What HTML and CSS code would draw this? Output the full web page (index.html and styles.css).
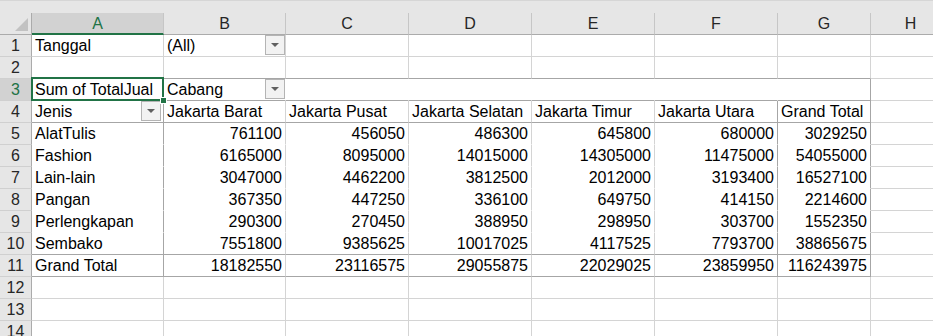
FILE: index.html
```html
<!DOCTYPE html>
<html lang="id">
<head>
    <meta charset="UTF-8">
    <title>Pivot - Penjualan</title>
    <link rel="stylesheet" href="styles.css">
</head>
<body>

<div class="sheet">
    <!-- area kosong di atas header kolom -->
    <div class="top-strip"></div>

    <!-- header kolom -->
    <div class="corner"></div>
    <div class="ch sel">A</div>
    <div class="ch">B</div>
    <div class="ch">C</div>
    <div class="ch">D</div>
    <div class="ch">E</div>
    <div class="ch">F</div>
    <div class="ch">G</div>
    <div class="ch">H</div>

    <!-- baris 1 : filter -->
    <div class="rh">1</div>
    <div class="c">Tanggal</div>
    <div class="c drop">(All)<span class="dd"></span></div>
    <div class="c"></div><div class="c"></div><div class="c"></div><div class="c"></div><div class="c"></div><div class="c"></div>

    <!-- baris 2 -->
    <div class="rh">2</div>
    <div class="c db"></div><div class="c db"></div><div class="c db"></div><div class="c db"></div><div class="c db"></div><div class="c db"></div><div class="c db"></div>
    <div class="c"></div>

    <!-- baris 3 : judul pivot -->
    <div class="rh sel">3</div>
    <div class="c dr db active">Sum of TotalJual<span class="cursor"><span class="handle"></span></span></div>
    <div class="c nr db drop">Cabang<span class="dd"></span></div>
    <div class="c nr db"></div>
    <div class="c nr db"></div>
    <div class="c nr db"></div>
    <div class="c nr db"></div>
    <div class="c dr db"></div>
    <div class="c"></div>

    <!-- baris 4 : header cabang -->
    <div class="rh">4</div>
    <div class="c dr db drop">Jenis<span class="dd dd-a"></span></div>
    <div class="c db">Jakarta Barat</div>
    <div class="c db">Jakarta Pusat</div>
    <div class="c db">Jakarta Selatan</div>
    <div class="c db">Jakarta Timur</div>
    <div class="c dr db">Jakarta Utara</div>
    <div class="c dr db">Grand Total</div>
    <div class="c"></div>

    <div class="rh">5</div>
    <div class="c dr nb">AlatTulis</div>
    <div class="c nb n">761100</div>
    <div class="c nb n">456050</div>
    <div class="c nb n">486300</div>
    <div class="c nb n">645800</div>
    <div class="c dr nb n">680000</div>
    <div class="c dr nb n">3029250</div>
    <div class="c"></div>

    <div class="rh">6</div>
    <div class="c dr nb">Fashion</div>
    <div class="c nb n">6165000</div>
    <div class="c nb n">8095000</div>
    <div class="c nb n">14015000</div>
    <div class="c nb n">14305000</div>
    <div class="c dr nb n">11475000</div>
    <div class="c dr nb n">54055000</div>
    <div class="c"></div>

    <div class="rh">7</div>
    <div class="c dr nb">Lain-lain</div>
    <div class="c nb n">3047000</div>
    <div class="c nb n">4462200</div>
    <div class="c nb n">3812500</div>
    <div class="c nb n">2012000</div>
    <div class="c dr nb n">3193400</div>
    <div class="c dr nb n">16527100</div>
    <div class="c"></div>

    <div class="rh">8</div>
    <div class="c dr nb">Pangan</div>
    <div class="c nb n">367350</div>
    <div class="c nb n">447250</div>
    <div class="c nb n">336100</div>
    <div class="c nb n">649750</div>
    <div class="c dr nb n">414150</div>
    <div class="c dr nb n">2214600</div>
    <div class="c"></div>

    <div class="rh">9</div>
    <div class="c dr nb">Perlengkapan</div>
    <div class="c nb n">290300</div>
    <div class="c nb n">270450</div>
    <div class="c nb n">388950</div>
    <div class="c nb n">298950</div>
    <div class="c dr nb n">303700</div>
    <div class="c dr nb n">1552350</div>
    <div class="c"></div>

    <div class="rh">10</div>
    <div class="c dr db">Sembako</div>
    <div class="c db n">7551800</div>
    <div class="c db n">9385625</div>
    <div class="c db n">10017025</div>
    <div class="c db n">4117525</div>
    <div class="c dr db n">7793700</div>
    <div class="c dr db n">38865675</div>
    <div class="c"></div>

    <!-- total -->
    <div class="rh">11</div>
    <div class="c dr db">Grand Total</div>
    <div class="c db n">18182550</div>
    <div class="c db n">23116575</div>
    <div class="c db n">29055875</div>
    <div class="c db n">22029025</div>
    <div class="c dr db n">23859950</div>
    <div class="c dr db n">116243975</div>
    <div class="c"></div>

    <div class="rh">12</div>
    <div class="c"></div><div class="c"></div><div class="c"></div><div class="c"></div><div class="c"></div><div class="c"></div><div class="c"></div><div class="c"></div>

    <div class="rh">13</div>
    <div class="c"></div><div class="c"></div><div class="c"></div><div class="c"></div><div class="c"></div><div class="c"></div><div class="c"></div><div class="c"></div>

    <div class="rh">14</div>
    <div class="c"></div><div class="c"></div><div class="c"></div><div class="c"></div><div class="c"></div><div class="c"></div><div class="c"></div><div class="c"></div>
</div>

</body>
</html>
```

FILE: styles.css
```css
body {
    margin: 0;
    padding: 0;
    background-color: white;
    font-family: "Liberation Sans", Arial, sans-serif;
    font-size: 16px;
    color: black;
    overflow: hidden;
}

.sheet {
    display: grid;
    grid-template-columns: 32px 132px 122px 123px 123px 123px 123px 93px 80px;
    grid-template-rows: 13px repeat(15, 22px);
    width: 933px;
    height: 336px;
    overflow: hidden;
}

.top-strip {
    grid-column: 1 / -1;
    background-color: #e6e6e6;
    border-top: 1px solid #d6d6d6;
    box-sizing: border-box;
}

/* sel biasa */
.c {
    box-sizing: border-box;
    border-right: 1px solid #d4d4d4;
    border-bottom: 1px solid #d4d4d4;
    padding: 2px 3px 0;
    line-height: 18px;
    white-space: nowrap;
}

.n {
    text-align: right;
}

/* garis pivot */
.db { border-bottom-color: #a6a6a6; }
.dr { border-right-color: #a6a6a6; }
.nb { border-bottom-color: white; }
.nr { border-right-color: white; }

/* header kolom & baris */
.corner,
.ch,
.rh {
    box-sizing: border-box;
    background-color: #e6e6e6;
    color: #262626;
}

.corner {
    position: relative;
    border-right: 1px solid #ababab;
    border-bottom: 1px solid #ababab;
}

.corner::after {
    content: "";
    position: absolute;
    right: 3px;
    bottom: 3px;
    width: 0;
    height: 0;
    border-left: 13px solid transparent;
    border-bottom: 13px solid #c2c2c2;
}

.ch {
    text-align: center;
    line-height: 21px;
    border-right: 1px solid #c6c6c6;
    border-bottom: 1px solid #ababab;
}

.rh {
    text-align: center;
    padding-top: 2px;
    line-height: 18px;
    border-right: 1px solid #ababab;
    border-bottom: 1px solid #d0d0d0;
}

.ch.sel,
.rh.sel {
    background-color: #d2d2d2;
    color: #217346;
}

.ch.sel {
    border-bottom: 2px solid #217346;
}

/* tombol filter pivot */
.drop {
    position: relative;
}

.dd {
    position: absolute;
    right: 0;
    top: 0;
    width: 20px;
    height: 20px;
    box-sizing: border-box;
    border: 1px solid #b4b4b4;
    background-color: #f2f2f2;
}

.dd-a {
    right: 2px;
}

.dd::after {
    content: "";
    position: absolute;
    left: 5px;
    top: 7px;
    border-left: 4px solid transparent;
    border-right: 4px solid transparent;
    border-top: 4px solid #606060;
}

/* sel aktif */
.active {
    position: relative;
}

.cursor {
    position: absolute;
    left: -1px;
    right: -1px;
    top: -2px;
    bottom: -1px;
    border: 2px solid #217346;
    z-index: 2;
}

.handle {
    position: absolute;
    right: -4px;
    bottom: -4px;
    width: 5px;
    height: 5px;
    background-color: #217346;
    box-shadow: 0 0 0 1px white;
}
```
